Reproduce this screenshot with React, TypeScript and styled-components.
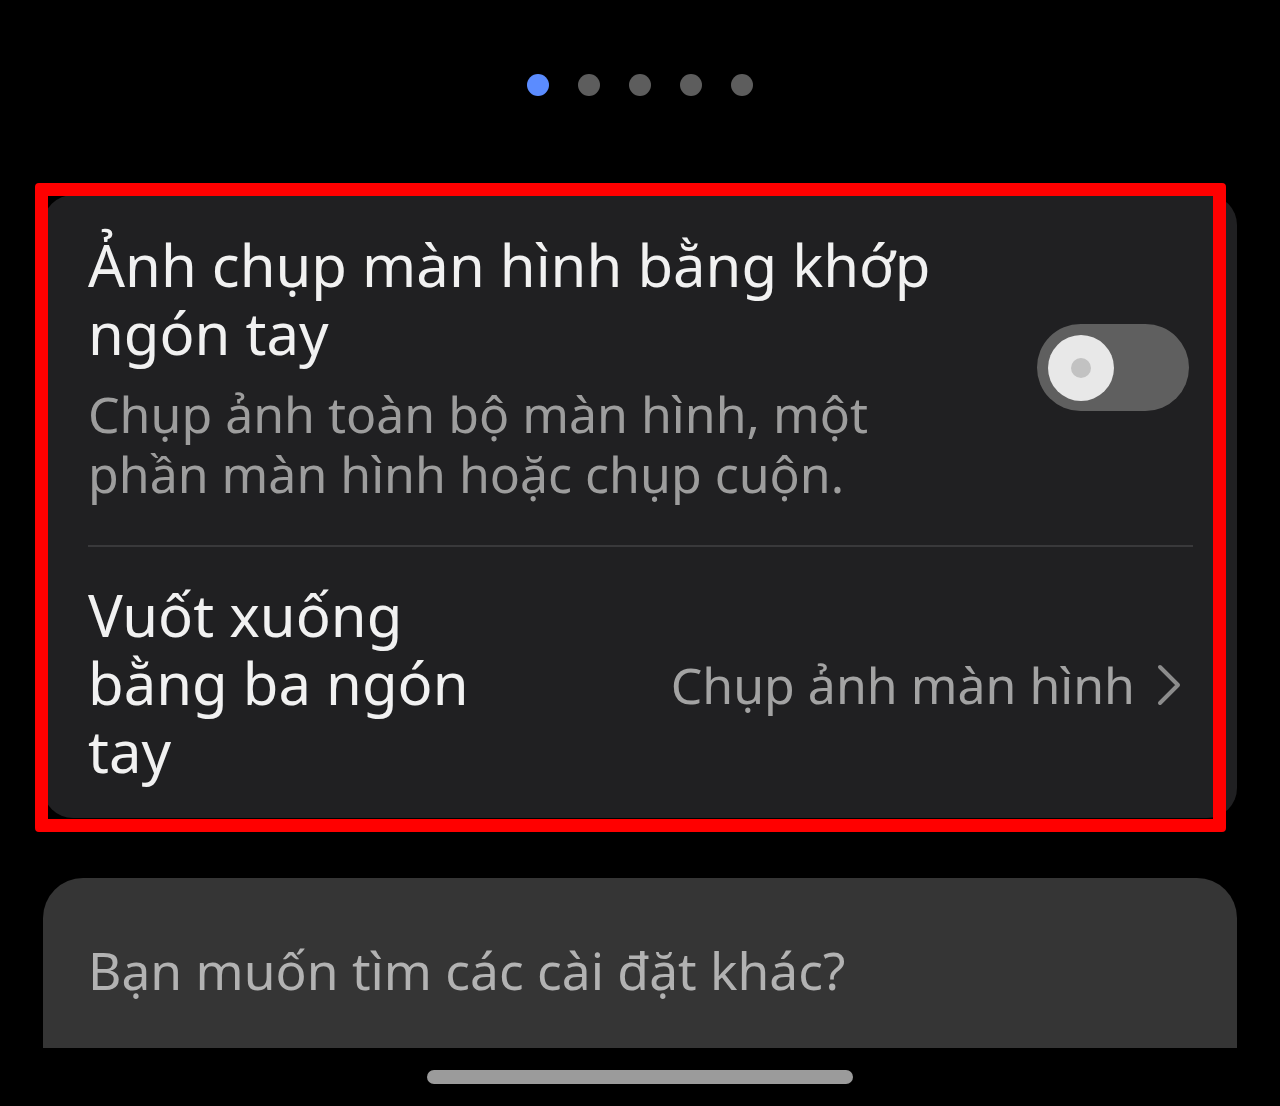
import React from "react";
import styled, { createGlobalStyle } from "styled-components";

const GlobalStyle = createGlobalStyle`
  html, body {
    margin: 0;
    padding: 0;
    background: #000;
  }
  body {
    font-family: "Noto Sans", "Open Sans", sans-serif;
    -webkit-font-smoothing: antialiased;
  }
`;

const Screen = styled.div`
  width: 1280px;
  height: 1106px;
  background: #000;
  overflow: hidden;
  display: flex;
  flex-direction: column;
  align-items: center;
`;

const Pager = styled.div`
  display: flex;
  gap: 29px;
  margin-top: 74px;
  height: 22px;
`;

const Dot = styled.span<{ $active?: boolean }>`
  width: 22px;
  height: 22px;
  border-radius: 50%;
  background: ${(p) => (p.$active ? "#5b8cff" : "#5d5d5d")};
`;

const CardWrap = styled.div`
  position: relative;
  margin-top: 99px;
  width: 1194px;
`;

const Card = styled.div`
  background: #202022;
  border-radius: 30px;
  padding: 0 44px 0 45px;
  display: flex;
  flex-direction: column;
`;

const Row = styled.div<{ $height: number; $lift?: number }>`
  height: ${(p) => p.$height}px;
  box-sizing: border-box;
  padding-bottom: ${(p) => p.$lift ?? 0}px;
  display: flex;
  align-items: center;
  justify-content: space-between;
`;

const Divider = styled.div`
  height: 2px;
  background: #39393b;
`;

const TextBlock = styled.div`
  display: flex;
  flex-direction: column;
`;

const Title = styled.div`
  color: #f1f1f1;
  font-size: 58px;
  line-height: 68px;
  font-weight: 400;
`;

const Subtitle = styled.div`
  color: #9d9d9d;
  font-size: 50px;
  line-height: 60px;
  margin-top: 17px;
`;

const Toggle = styled.div`
  width: 152px;
  height: 87px;
  border-radius: 44px;
  background: #5f5f5f;
  display: flex;
  align-items: center;
  padding-left: 11px;
  box-sizing: border-box;
  margin-right: 4px;
  flex-shrink: 0;
`;

const Knob = styled.div`
  width: 66px;
  height: 66px;
  border-radius: 50%;
  background: #e8e8e8;
  display: flex;
  align-items: center;
  justify-content: center;
  &::after {
    content: "";
    width: 20px;
    height: 20px;
    border-radius: 50%;
    background: #c2c2c2;
  }
`;

const ValueLink = styled.div`
  display: flex;
  align-items: center;
  gap: 20px;
  color: #a3a3a3;
  font-size: 50px;
  margin-right: 10px;
  margin-top: 4px;
`;

const Highlight = styled.div`
  position: absolute;
  left: -8px;
  top: -12px;
  right: 11px;
  bottom: -14px;
  border: 13px solid #ff0000;
  border-radius: 4px;
  pointer-events: none;
`;

const MoreCard = styled.div`
  margin-top: 60px;
  width: 1194px;
  height: 170px;
  box-sizing: border-box;
  background: #353535;
  border-radius: 40px 40px 0 0;
  padding: 14px 45px 0;
  display: flex;
  align-items: center;
  color: #b2b2b2;
  font-size: 51.5px;
`;

const HomeBar = styled.div`
  margin-top: 22px;
  width: 426px;
  height: 14px;
  border-radius: 7px;
  background: #9b9b9b;
`;

const Chevron = () => (
  <svg width="28" height="42" viewBox="0 0 28 42" fill="none">
    <path
      d="M5 3 L23 21 L5 39"
      stroke="#8c8c8c"
      strokeWidth="4"
      strokeLinecap="round"
      strokeLinejoin="round"
    />
  </svg>
);

export default function App() {
  return (
    <>
      <GlobalStyle />
      <Screen>
        <Pager>
          <Dot $active />
          <Dot />
          <Dot />
          <Dot />
          <Dot />
        </Pager>

        <CardWrap>
          <Card>
            <Row $height={350} $lift={5}>
              <TextBlock>
                <Title>
                  Ảnh chụp màn hình bằng khớp
                  <br />
                  ngón tay
                </Title>
                <Subtitle>
                  Chụp ảnh toàn bộ màn hình, một
                  <br />
                  phần màn hình hoặc chụp cuộn.
                </Subtitle>
              </TextBlock>
              <Toggle>
                <Knob />
              </Toggle>
            </Row>
            <Divider />
            <Row $height={271}>
              <Title>
                Vuốt xuống
                <br />
                bằng ba ngón
                <br />
                tay
              </Title>
              <ValueLink>
                Chụp ảnh màn hình
                <Chevron />
              </ValueLink>
            </Row>
          </Card>
          <Highlight />
        </CardWrap>

        <MoreCard>Bạn muốn tìm các cài đặt khác?</MoreCard>
        <HomeBar />
      </Screen>
    </>
  );
}
